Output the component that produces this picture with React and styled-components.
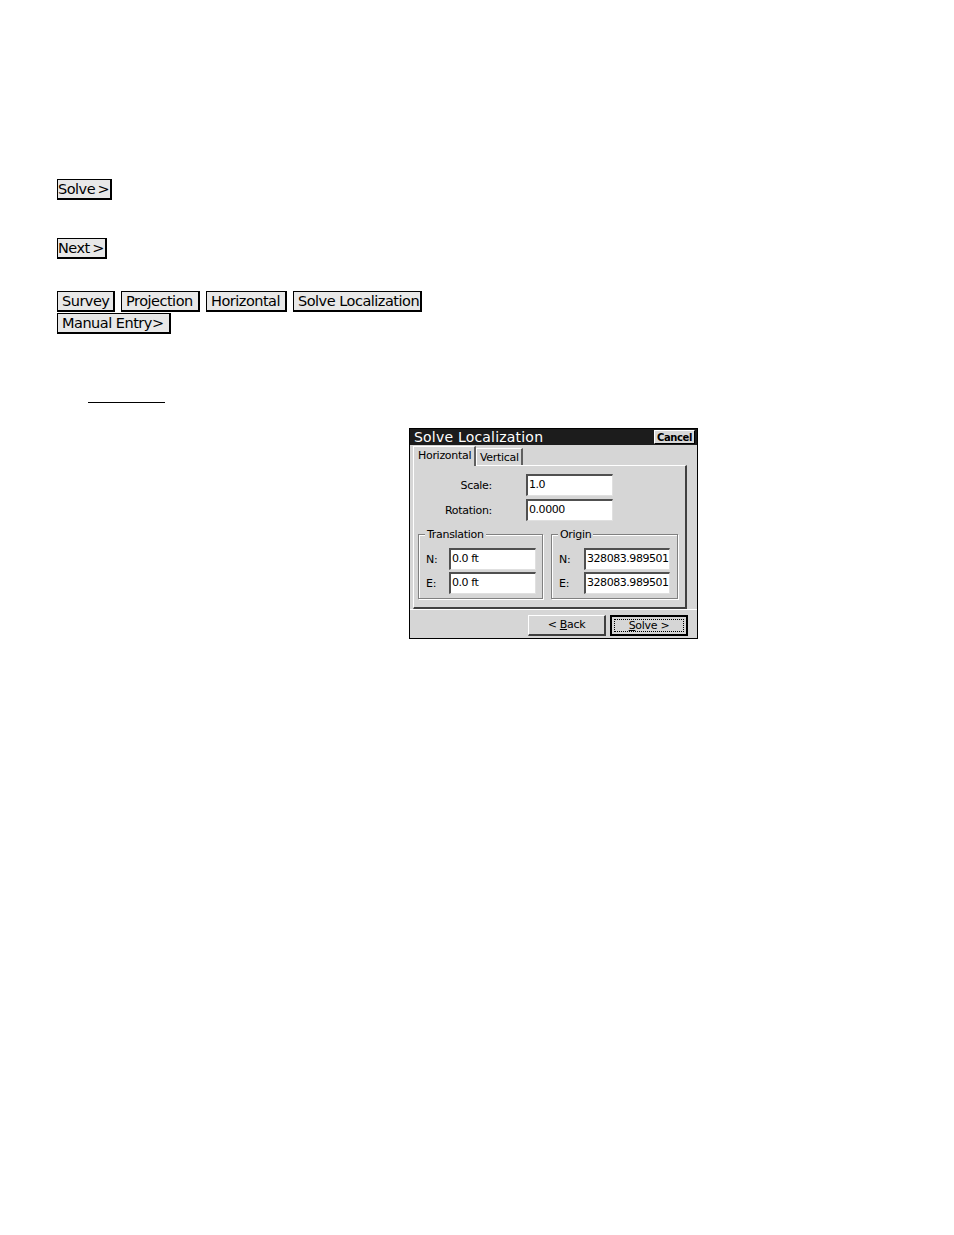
import React from "react";
import styled, { createGlobalStyle } from "styled-components";

const Global = createGlobalStyle`
  html, body { margin: 0; padding: 0; background: #fff; }
  body { font-family: "DejaVu Sans", "Liberation Sans", sans-serif; color: #000; }
`;

const Page = styled.div`
  width: 954px;
  height: 1235px;
  box-sizing: border-box;
  padding: 179px 0 0 57px;
  display: flex;
  flex-direction: column;
  align-items: flex-start;
`;

const DocButton = styled.span`
  display: inline-flex;
  align-items: center;
  box-sizing: border-box;
  height: 21px;
  width: ${(p) => p.$w}px;
  padding-left: ${(p) => p.$pl ?? 4}px;
  background: #e8e8e8;
  border: 1px solid #000;
  border-right-width: 2px;
  border-bottom-width: 2px;
  font-size: 14.5px;
  letter-spacing: -0.5px;
  white-space: nowrap;
  overflow: hidden;
  line-height: 1;
`;

const Row = styled.div`
  display: flex;
  gap: ${(p) => p.$gap || 6}px;
  margin-top: ${(p) => p.$mt || 0}px;
`;

const Underline = styled.div`
  width: 77px;
  height: 1px;
  background: #000;
  margin: 68px 0 0 31px;
`;

const Dialog = styled.div`
  margin: 25px 0 0 352px;
  width: 289px;
  height: 211px;
  box-sizing: border-box;
  background: #d6d6d6;
  border: 1px solid #000;
  display: flex;
  flex-direction: column;
  font-size: 11px;
  letter-spacing: -0.3px;
`;

const TitleBar = styled.div`
  height: 16px;
  background: #1c1c1c;
  display: flex;
  align-items: center;
  justify-content: space-between;
  padding: 0 2px 0 4px;
`;

const Title = styled.span`
  color: #fff;
  font-size: 14px;
  letter-spacing: 0.2px;
`;

const CancelButton = styled.span`
  background: #d8d8d8;
  color: #000;
  font-size: 10px;
  font-weight: bold;
  letter-spacing: -0.4px;
  height: 14px;
  width: 41px;
  box-sizing: border-box;
  display: flex;
  align-items: center;
  justify-content: center;
  border: 1px solid #fff;
  border-right-color: #000;
  border-bottom-color: #000;
`;

const Tabs = styled.div`
  display: flex;
  align-items: flex-end;
  padding: 2px 0 0 3px;
  height: 20px;
  box-sizing: border-box;
  position: relative;
  z-index: 1;
`;

const Tab = styled.span`
  box-sizing: border-box;
  height: ${(p) => (p.$active ? 20 : 17)}px;
  width: ${(p) => p.$w}px;
  padding: ${(p) => (p.$active ? "2px 0 0 4px" : "2px 0 0 3px")};
  border: 1px solid #fff;
  border-right: 2px solid #606060;
  border-bottom: none;
  background: #d6d6d6;
  margin-bottom: ${(p) => (p.$active ? -1 : 0)}px;
`;

const Panel = styled.div`
  margin: 0 10px 0 3px;
  height: 144px;
  box-sizing: border-box;
  border: 1px solid #fff;
  border-right: 2px solid #404040;
  border-bottom: 2px solid #404040;
  display: flex;
  flex-direction: column;
  padding: 8px 0 0 4px;
`;

const FieldRow = styled.div`
  display: flex;
  align-items: center;
  margin-bottom: ${(p) => p.$mb ?? 3}px;
`;

const Label = styled.span`
  width: ${(p) => p.$w}px;
  text-align: ${(p) => p.$align || "left"};
  padding-right: ${(p) => p.$pr || 0}px;
  box-sizing: border-box;
`;

const Input = styled.span`
  box-sizing: border-box;
  width: ${(p) => p.$w || 87}px;
  height: 22px;
  background: #fff;
  border-top: 2px solid #505050;
  border-left: 2px solid #505050;
  border-right: 1px solid #e0e0e0;
  border-bottom: 1px solid #e0e0e0;
  padding: 0 0 3px 1px;
  display: flex;
  align-items: center;
  white-space: nowrap;
  overflow: hidden;
  letter-spacing: -0.45px;
`;

const Groups = styled.div`
  display: flex;
  gap: 8px;
  margin-top: 10px;
`;

const Group = styled.div`
  position: relative;
  box-sizing: border-box;
  width: ${(p) => p.$w}px;
  height: 65px;
  border: 1px solid #808080;
  box-shadow: inset 1px 1px 0 #fff, 1px 1px 0 #fff;
  padding: 13px 0 0 7px;
  display: flex;
  flex-direction: column;
  gap: 2px;
`;

const Legend = styled.span`
  position: absolute;
  top: -7px;
  left: 6px;
  background: #d6d6d6;
  padding: 0 2px;
`;

const Footer = styled.div`
  flex: 1;
  display: flex;
  justify-content: flex-end;
  align-items: center;
  gap: 4px;
  padding: 2px 9px 0 0;
  border-top: 1px solid #fff;
`;

const DlgButton = styled.span`
  box-sizing: border-box;
  width: 78px;
  height: 21px;
  display: flex;
  align-items: center;
  justify-content: center;
  white-space: pre;
  background: #d6d6d6;
  border: 1px solid #fff;
  border-right: 2px solid #404040;
  border-bottom: 2px solid #404040;
  ${(p) =>
    p.$default &&
    `
    border: 2px solid #000;
    outline: 1px dotted #000;
    outline-offset: -5px;
  `}
  u { text-decoration: underline; }
`;

export default function App() {
  return (
    <>
      <Global />
      <Page>
        <DocButton $w={55} $pl={0}>Solve&thinsp;&gt;</DocButton>
        <Row $mt={38}>
          <DocButton $w={50} $pl={0}>Next&thinsp;&gt;</DocButton>
        </Row>
        <Row $mt={32} $gap={6}>
          <DocButton $w={58}>Survey</DocButton>
          <DocButton $w={79}>Projection</DocButton>
          <DocButton $w={81}>Horizontal</DocButton>
          <DocButton $w={129}>Solve Localization</DocButton>
        </Row>
        <Row $mt={1}>
          <DocButton $w={114}>Manual Entry&gt;</DocButton>
        </Row>
        <Underline />
        <Dialog>
          <TitleBar>
            <Title>Solve Localization</Title>
            <CancelButton>Cancel</CancelButton>
          </TitleBar>
          <Tabs>
            <Tab $active $w={63}>Horizontal</Tab>
            <Tab $w={47}>Vertical</Tab>
          </Tabs>
          <Panel>
            <FieldRow>
              <Label $w={108} $align="right" $pr={34}>Scale:</Label>
              <Input>1.0</Input>
            </FieldRow>
            <FieldRow>
              <Label $w={108} $align="right" $pr={34}>Rotation:</Label>
              <Input>0.0000</Input>
            </FieldRow>
            <Groups>
              <Group $w={125}>
                <Legend>Translation</Legend>
                <FieldRow $mb={0}>
                  <Label $w={23}>N:</Label>
                  <Input>0.0 ft</Input>
                </FieldRow>
                <FieldRow $mb={0}>
                  <Label $w={23}>E:</Label>
                  <Input>0.0 ft</Input>
                </FieldRow>
              </Group>
              <Group $w={127}>
                <Legend>Origin</Legend>
                <FieldRow $mb={0}>
                  <Label $w={25}>N:</Label>
                  <Input $w={86}>328083.989501</Input>
                </FieldRow>
                <FieldRow $mb={0}>
                  <Label $w={25}>E:</Label>
                  <Input $w={86}>328083.989501</Input>
                </FieldRow>
              </Group>
            </Groups>
          </Panel>
          <Footer>
            <DlgButton>{"< "}<u>B</u>ack</DlgButton>
            <DlgButton $default><u>S</u>{"olve >"}</DlgButton>
          </Footer>
        </Dialog>
      </Page>
    </>
  );
}
